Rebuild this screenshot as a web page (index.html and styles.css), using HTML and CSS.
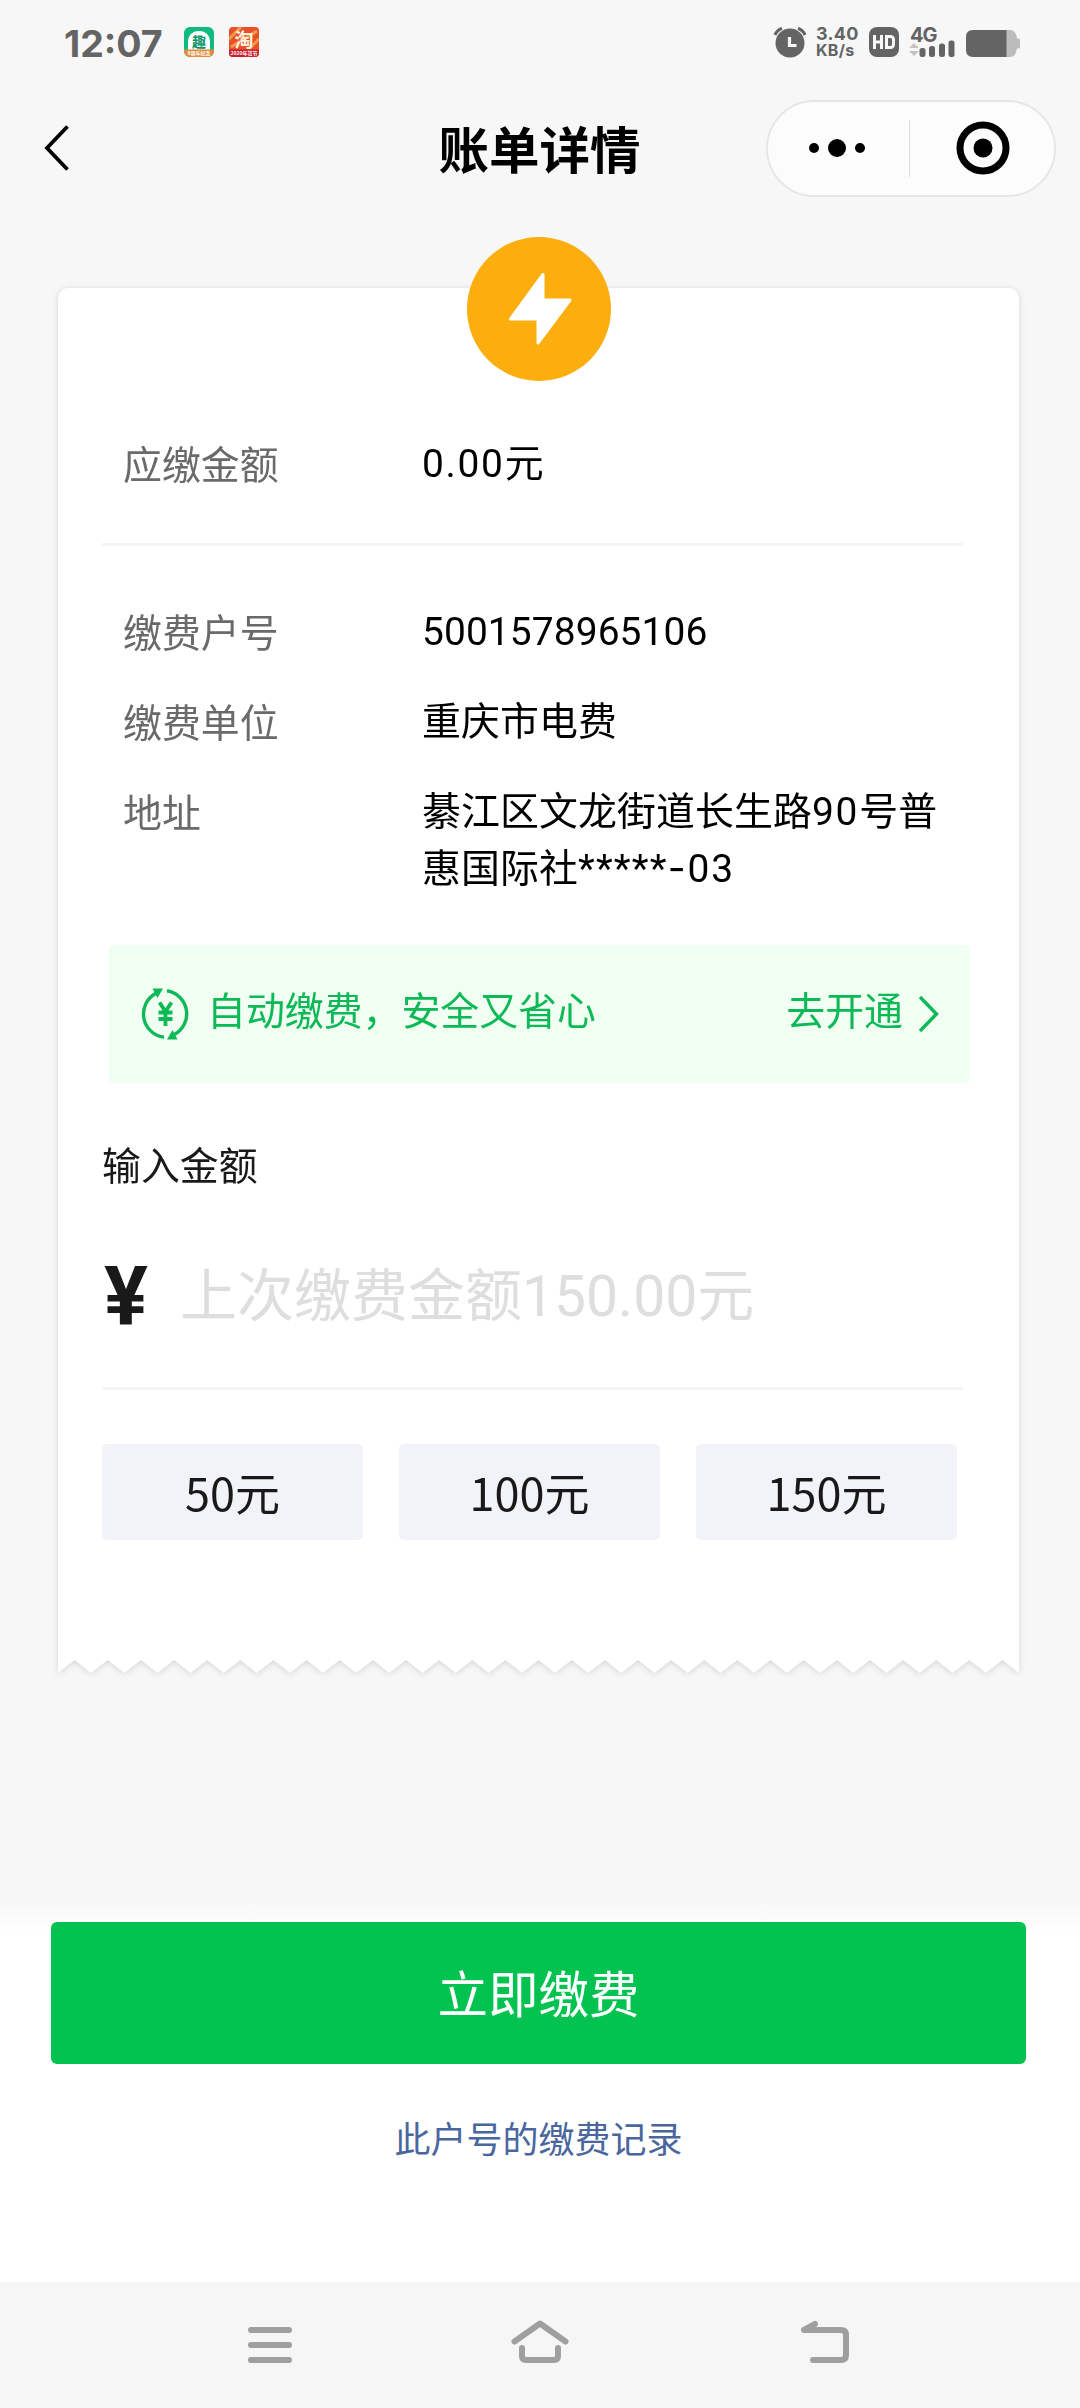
FILE: index.html
```html
<!DOCTYPE html>
<html lang="zh-CN">
<head>
<meta charset="utf-8">
<title>账单详情</title>
<link rel="stylesheet" href="styles.css">
</head>
<body>
<div class="status">
  <span class="clock">12:07</span>
  <svg class="app" viewBox="0 0 30 30" width="30" height="30">
    <defs><clipPath id="r1"><rect width="30" height="30" rx="6"/></clipPath></defs>
    <g clip-path="url(#r1)"><rect width="30" height="30" fill="#0dba80"/><path d="M4 23V14a10 10 0 0 1 10-10h2a10 10 0 0 1 10 10v9z" fill="#fff"/><rect y="22.500" width="30" height="8" fill="#e08a3c"/></g>
    <text x="15" y="20" class="app-a">趣</text><text x="15" y="28" class="app-b">8周年纪念</text>
  </svg>
  <svg class="app app-second" viewBox="0 0 30 30" width="30" height="30">
    <defs><clipPath id="r2"><rect width="30" height="30" rx="4"/></clipPath></defs>
    <g clip-path="url(#r2)"><rect width="30" height="30" fill="#e8502c"/><path d="M0 12 12 0M2 20 28 4M20 22 30 12" stroke="#f39a4c" stroke-width="3"/><rect y="22.500" width="30" height="8" fill="#c81e2c"/></g>
    <text x="15" y="19.500" class="app-c">淘</text><text x="15" y="28" class="app-b">2020年货节</text>
  </svg>
  <svg class="alarm" viewBox="0 0 34 32" width="34" height="32">
    <circle cx="17" cy="17" r="14.500" fill="#646464"/>
    <path d="M2 9Q4 4 9 2.500M25 2.500Q30 4 32 9" fill="none" stroke="#646464" stroke-width="3.200"/>
    <path d="M16.500 11v8.500h7" fill="none" stroke="#f7f7f7" stroke-width="3.200"/>
  </svg>
  <div class="speed"><span>3.40</span><span>KB/s</span></div>
  <svg class="hd" viewBox="0 0 30 30" width="30" height="30"><rect width="30" height="30" rx="8" fill="#646464"/><path d="M5.500 8v14M12.500 8v14M5.500 15h7M17.500 9.500h4a3 3 0 0 1 3 3v5a3 3 0 0 1-3 3h-4z" fill="none" stroke="#f7f7f7" stroke-width="3"/></svg>
  <svg class="signal" viewBox="0 0 46 32" width="46" height="32">
    <text x="1" y="15.500" class="net">4G</text>
    <path d="M0 22l5-5 5 5zM0 25h10l-5 5z" fill="#c4c4c4"/>
    <g fill="#646464"><rect x="10.500" y="22" width="6" height="9" rx="2.500"/><rect x="20" y="20" width="6" height="11" rx="2.500"/><rect x="30" y="17.500" width="6" height="13.500" rx="2.500"/><rect x="39.500" y="14.500" width="6" height="16.500" rx="2.500"/></g>
  </svg>
  <svg class="battery" viewBox="0 0 54 27" width="54" height="27"><path d="M40 0h4q6 0 7 8.500h1.500q1.500 0 1.500 1.500v7q0 1.500-1.500 1.500H51Q50 27 44 27h-4z" fill="#bcbcbc"/><path d="M7 0h33.500v27H7q-7 0-7-7V7q0-7 7-7z" fill="#646464"/></svg>
</div>

<header class="navbar">
  <svg class="back" viewBox="0 0 28 48" width="28" height="48"><path d="M24.500 2.500 4 24l20.500 21.500" fill="none" stroke="#000" stroke-width="3.800"/></svg>
  <h1>账单详情</h1>
  <div class="capsule">
    <svg viewBox="0 0 58 20" width="58" height="20"><circle cx="6" cy="10" r="5"/><circle cx="29" cy="10" r="9"/><circle cx="52" cy="10" r="5"/></svg>
    <i class="sep"></i>
    <svg viewBox="0 0 54 54" width="54" height="54"><circle cx="27" cy="27" r="23" fill="none" stroke="#000" stroke-width="7"/><circle cx="27" cy="27" r="9.500"/></svg>
  </div>
</header>

<main>
  <section class="receipt">
    <div class="card">
      <dl class="row first"><dt>应缴金额</dt><dd><span class="money">0.00</span>元</dd></dl>
      <hr>
      <dl class="row"><dt>缴费户号</dt><dd>5001578965106</dd></dl>
      <dl class="row"><dt>缴费单位</dt><dd>重庆市电费</dd></dl>
      <dl class="row"><dt>地址</dt><dd>綦江区文龙街道长生路<span class="num">90</span>号普<br>惠国际社<span class="mask">*****</span><span class="dash">-</span><span class="num">03</span></dd></dl>
      <div class="auto">
        <svg viewBox="0 0 52 52" width="52" height="52" fill="none" stroke="#0db957" stroke-width="3.400"><path d="M28 2.700A23.500 23.500 0 0 1 35.500 46.500M25 49.300A23.500 23.500 0 0 1 16.500 5.500"/><path d="M13.500.5H24L18.500 10zM38.500 51.500H28L33.500 42z" fill="#0db957" stroke="none"/><path d="M20.500 14.500l6 9 6-9M26.500 23v15M19.500 24.500h14M19.500 31h14" stroke-width="3.800"/></svg>
        <span class="auto-text">自动缴费，安全又省心</span>
        <span class="auto-link">去开通</span>
        <svg class="chev" viewBox="0 0 22 38" width="22" height="38"><path d="M2 2l16.500 17L2 36" fill="none" stroke="#0db957" stroke-width="3.400"/></svg>
      </div>
      <h2>输入金额</h2>
      <div class="amount"><span class="yen">¥</span><span class="hint">上次缴费金额150.00元</span></div>
      <hr>
      <div class="chips"><span>50元</span><span>100元</span><span>150元</span></div>
    </div>
    <svg class="teeth" viewBox="0 0 580 14" preserveAspectRatio="none"><path d="M0 0H580V14L570 1 560 14 550 1 540 14 530 1 520 14 510 1 500 14 490 1 480 14 470 1 460 14 450 1 440 14 430 1 420 14 410 1 400 14 390 1 380 14 370 1 360 14 350 1 340 14 330 1 320 14 310 1 300 14 290 1 280 14 270 1 260 14 250 1 240 14 230 1 220 14 210 1 200 14 190 1 180 14 170 1 160 14 150 1 140 14 130 1 120 14 110 1 100 14 90 1 80 14 70 1 60 14 50 1 40 14 30 1 20 14 10 1 0 14Z" fill="#fff"/></svg>
  </section>
  <svg class="badge" viewBox="0 0 144 144" width="144" height="144"><circle cx="72" cy="72" r="72" fill="#fbae0d"/><path d="M76 37.500V63h27L71 106V82H43.500z" fill="#fff" stroke="#fff" stroke-width="3" stroke-linejoin="round"/></svg>
</main>

<footer class="pay">
  <button>立即缴费</button>
  <a>此户号的缴费记录</a>
</footer>

<nav class="system">
  <svg viewBox="0 0 60 48" width="60" height="48"><path d="M11 15h38M11 30h38M11 45h38"/></svg>
  <svg class="home" viewBox="0 0 60 48" width="60" height="48"><path d="M4.500 26.500 30 8.500l25.500 18M12 33v8q0 4 4 4h28q4 0 4-4v-8"/></svg>
  <svg class="return" viewBox="0 0 60 48" width="60" height="48"><path d="M20 9 9 15h37q5 0 5 5v20q0 5-5 5H18"/></svg>
</nav>
</body>
</html>
```
FILE: styles.css
```css
* { box-sizing: border-box; }
body {
  margin: 0;
  height: 2408px;
  display: flex;
  flex-direction: column;
  background: #f7f7f7;
  color: #000;
  font-family: Roboto, "Noto Sans CJK SC", sans-serif;
}
h1, h2, dl, dd, hr { margin: 0; }
svg { display: block; flex: none; overflow: visible; }

.status { height: 84px; padding: 0 59px 0 64px; display: flex; align-items: center; color: #646464; }
.clock { width: 120px; font: 700 37.5px/40px Inter, sans-serif; padding-top: 4px; }
.app-second { margin-left: 15px; }
.app-a, .app-b, .app-c { text-anchor: middle; font-family: "Noto Sans CJK SC", sans-serif; font-weight: 700; }
.app-a { font-size: 14px; fill: #0b9469; }
.app-b { font-size: 5px; fill: #fff; }
.app-c { font-size: 19px; fill: #fff4e0; }
.alarm { margin-left: 514px; }
.speed { display: flex; flex-direction: column; width: 62px; padding-left: 9px; font: 700 18px/16px Inter, sans-serif; letter-spacing: .3px; }
.speed span:last-child { font-size: 16px; }
.signal { margin-left: 10px; }
.net { font: 700 20px Inter, sans-serif; fill: #646464; letter-spacing: -1px; }
.battery { margin-left: 11px; margin-top: 3px; }

.navbar { height: 132px; display: grid; grid-template-columns: 314px 1fr 314px; align-items: center; padding-bottom: 4px; }
.back { margin-left: 43px; }
h1 { font-size: 50.5px; line-height: 60px; font-weight: 700; text-align: center; padding-top: 7px; margin-left: -1px; }
.capsule { width: 290px; height: 97px; border: 2px solid #e6e6e6; border-radius: 49px; background: #fcfcfc; display: flex; align-items: center; padding: 0 42px 0 40px; }
.sep { width: 1px; height: 57px; background: #dcdcdc; margin: 0 46px 0 43px; }

main { position: relative; flex: 1; padding: 72px 61px 0 58px; }
.receipt { filter: drop-shadow(0 1px 3px rgba(40, 50, 60, .18)); }
.card { height: 1372px; background: #fff; border-radius: 10px 10px 0 0; padding: 0 56px 0 44px; display: flex; flex-direction: column; }
.badge { position: absolute; left: 467px; top: 21px; }
.teeth { width: 961px; height: 14px; margin-top: -1px; }
hr { border: 0; height: 3px; background: #f3f5f5; width: 861px; flex: none; }
.row { display: flex; font-size: 38.9px; line-height: 57px; margin-bottom: 33px; padding-left: 21px; }
.row dt { width: 299px; color: #6a6a6a; padding-top: 2px; margin-bottom: -2px; }
.row dd { white-space: nowrap; letter-spacing: .1px; }
.money { letter-spacing: 1.7px; }
.num { letter-spacing: 1.8px; }
.mask { letter-spacing: 1.2px; }
.dash { font-family: Inter, sans-serif; letter-spacing: 2px; line-height: 1; }
.row.first { margin: 147px 0 51px; }
.row.first + hr { margin-bottom: 57px; }
.auto { width: 861px; height: 138px; margin: 0 0 0 7px; padding: 0 30px; display: flex; align-items: center; background: #f0fff2; border-radius: 4px; color: #0db957; font-size: 38.9px; line-height: 56px; flex: none; }
.row + .auto { margin-top: 15px; }
.auto-text { flex: 1; margin-left: 16px; }
.auto-text, .auto-link { margin-top: -4px; }
.chev { margin-left: 15px; }
h2 { margin-top: 56px; font-size: 38.9px; line-height: 56px; font-weight: 400; color: #191919; }
.amount { height: 192px; padding-top: 9px; display: flex; align-items: center; }
.yen { font-size: 82px; font-weight: 700; line-height: 90px; width: 78px; padding-left: 2px; color: #191919; }
.hint { font-size: 57px; line-height: 80px; color: #dedede; padding-top: 2px; }
.chips { display: flex; gap: 36px; margin-top: 54px; }
.chips span { width: 261px; height: 96px; border-radius: 5px; background: #f2f3f8; color: #191919; font: 45px/96px "Noto Sans CJK SC", sans-serif; text-align: center; }

.pay { height: 382px; padding: 22px 54px 0 51px; display: flex; flex-direction: column; align-items: center; background: linear-gradient(#f7f7f7, #fff 32px); }
button { width: 975px; height: 142px; border: 0; border-radius: 6px; background: #02c350; color: #fff; font: 50.5px/70px Roboto, "Noto Sans CJK SC", sans-serif; padding: 6px 0 0; }
.pay a { margin-top: 52px; font-size: 36px; line-height: 50px; color: #4a669e; }

.system { height: 126px; background: #f6f6f6; display: flex; padding: 30px 0 0 240px; }
.system svg { height: 54px; fill: none; stroke: #9f9f9f; stroke-width: 6; stroke-linecap: round; stroke-linejoin: round; }
.home { margin-left: 210px; }
.return { margin-left: 225px; }
```
